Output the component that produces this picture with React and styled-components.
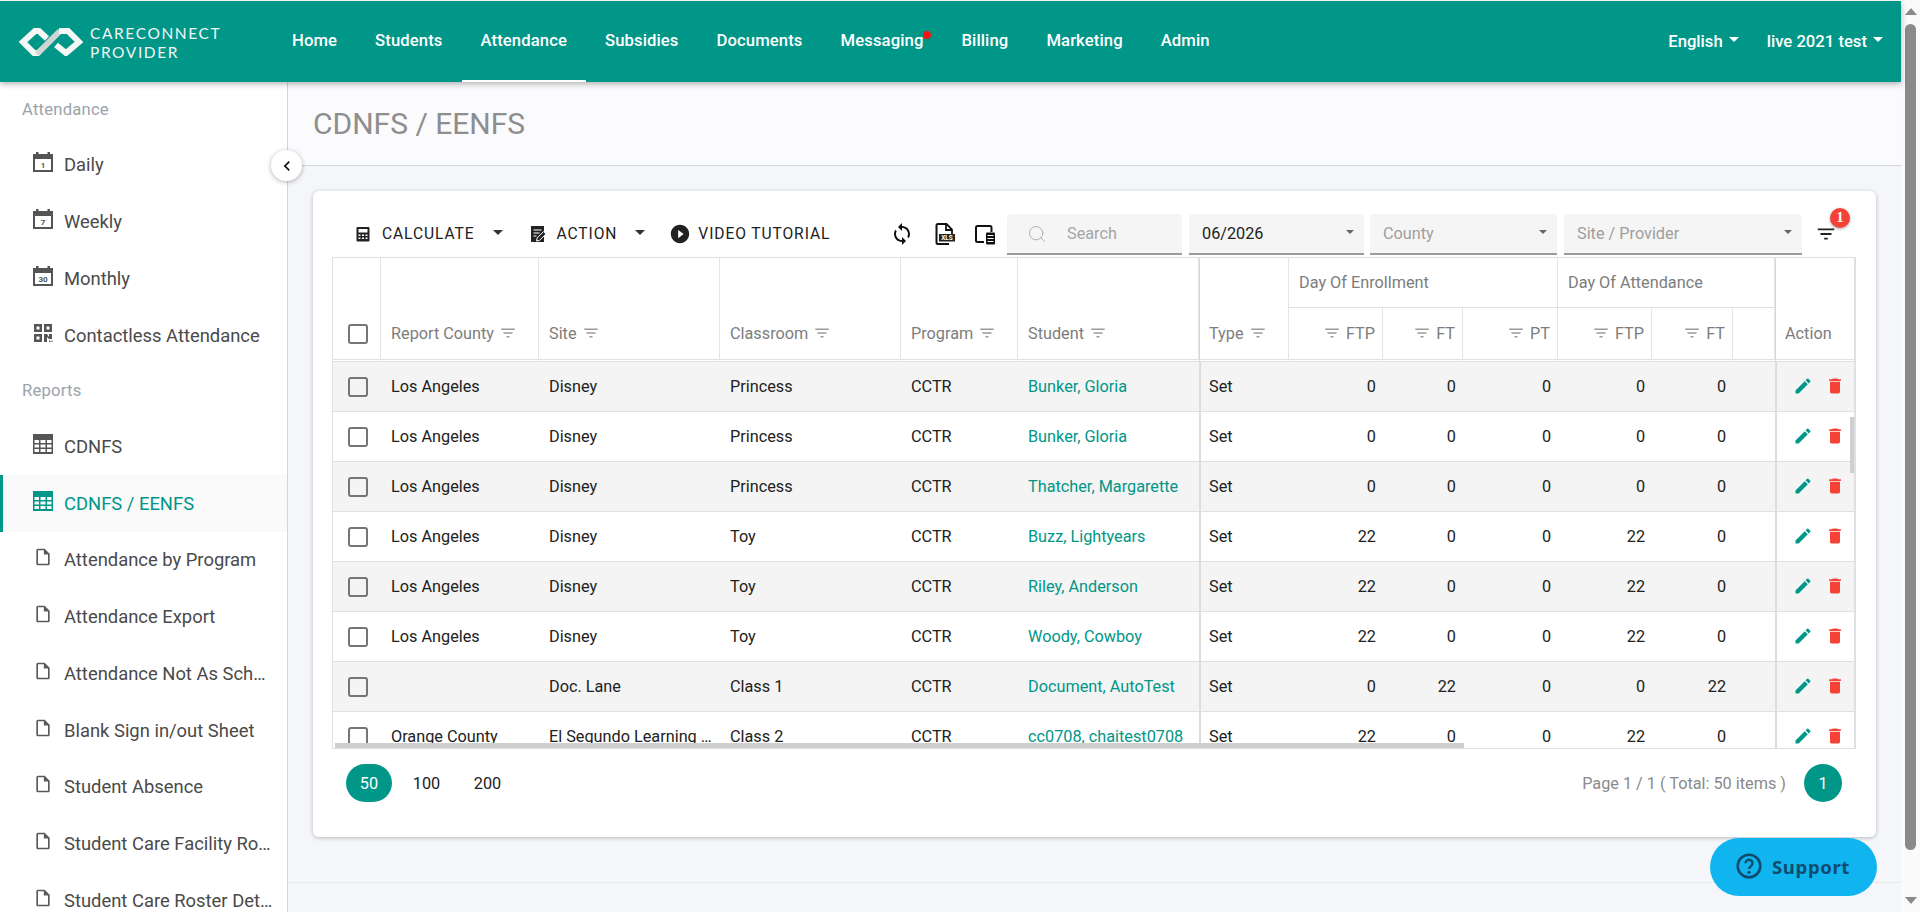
import React from "react";
import styled, { createGlobalStyle } from "styled-components";
import {
  MdPlayCircleFilled,
  MdSync,
  MdFilterList,
  MdEdit,
  MdDelete,
  MdChevronLeft,
} from "react-icons/md";
import { Search as SearchIcon } from "lucide-react";

const TEAL = "#009688";

const GlobalStyle = createGlobalStyle`
  * { box-sizing: border-box; }
  html, body { margin: 0; height: 100%; overflow: hidden; }
  body { font-family: Roboto, "Liberation Sans", sans-serif; background: #fff; }
`;

const Page = styled.div`
  display: flex;
  height: 912px;
  overflow: hidden;
`;

const Main = styled.div`
  flex: 1;
  min-width: 0;
  display: flex;
  flex-direction: column;
  padding-top: 1px;
  background: #fff;
`;

const ScrollRail = styled.div`
  width: 19px;
  background: #fafafa;
  display: flex;
  flex-direction: column;
  align-items: center;
  padding: 8px 0 8px;
`;

const RailArrow = styled.div`
  width: 0;
  height: 0;
  border-left: 6px solid transparent;
  border-right: 6px solid transparent;
  ${(p) => (p.$down ? "border-top: 7px solid #8a8a8a;" : "border-bottom: 7px solid #8a8a8a;")}
  ${(p) => (p.$down ? "margin-top: auto;" : "")}
`;

const RailThumb = styled.div`
  width: 11px;
  height: 826px;
  margin-top: 9px;
  margin-left: -1px;
  border-radius: 6px;
  background: #8a8a8a;
`;

const TopBar = styled.header`
  height: 81px;
  background: ${TEAL};
  display: flex;
  align-items: center;
  padding-left: 19px;
  box-shadow: 0 2px 6px rgba(0, 0, 0, 0.3);
  position: relative;
  z-index: 3;
  color: #fff;
`;

const Brand = styled.div`
  display: flex;
  align-items: center;
  gap: 7px;
  width: 254px;
`;

const BrandText = styled.div`
  font-family: Lato, Roboto, sans-serif;
  font-size: 15.5px;
  line-height: 19px;
  letter-spacing: 1.6px;
  color: #f2f7f6;
  margin-top: 2px;
`;

const NavList = styled.nav`
  display: flex;
  align-items: stretch;
  height: 100%;
  flex: 1;
`;

const NavItem = styled.a`
  position: relative;
  display: flex;
  align-items: center;
  padding: 0 19px;
  font-size: 16.67px;
  font-weight: 500;
  letter-spacing: 0.1px;
  color: #fff;
  margin-top: -1px;
  border-bottom: ${(p) => (p.$active ? "2px solid #fff" : "2px solid transparent")};
`;

const NavDot = styled.span`
  position: absolute;
  top: 31px;
  right: 11px;
  width: 8px;
  height: 8px;
  border-radius: 50%;
  background: #f01414;
`;

const TopRight = styled.div`
  display: flex;
  gap: 28px;
  padding-right: 18px;
  font-size: 16.67px;
  font-weight: 500;
  margin-top: -1px;
`;

const TopMenu = styled.span`
  display: flex;
  align-items: center;
  gap: 6px;
`;

const Caret = styled.span`
  display: inline-block;
  width: 0;
  height: 0;
  border-left: ${(p) => p.$size || 5}px solid transparent;
  border-right: ${(p) => p.$size || 5}px solid transparent;
  border-top: ${(p) => p.$size || 5}px solid ${(p) => p.$color || "#fff"};
  margin-bottom: 3px;
  margin-left: ${(p) => p.$offset || 0}px;
`;

const Body = styled.div`
  flex: 1;
  min-height: 0;
  display: flex;
  position: relative;
`;

const Sidebar = styled.aside`
  width: 288px;
  flex-shrink: 0;
  background: #fff;
  border-right: 1px solid #d5d5d5;
  overflow: hidden;
`;

const SideLabel = styled.div`
  height: 54.5px;
  display: flex;
  align-items: center;
  padding-left: 22px;
  font-size: 16.67px;
  letter-spacing: 0.2px;
  color: #9ba3ab;
`;

const SideItem = styled.a`
  height: 56.75px;
  display: flex;
  align-items: center;
  gap: 11px;
  padding-left: ${(p) => (p.$active ? 30 : 33)}px;
  font-size: 18.4px;
  color: ${(p) => (p.$active ? TEAL : "#4a4a4a")};
  background: ${(p) => (p.$active ? "#fafafa" : "transparent")};
  border-left: ${(p) => (p.$active ? `3px solid ${TEAL}` : "none")};

  svg {
    flex-shrink: 0;
    margin-bottom: 5px;
  }
`;

const SideText = styled.span`
  max-width: 209px;
  white-space: nowrap;
  overflow: hidden;
  text-overflow: ellipsis;
`;

const Collapse = styled.button`
  position: absolute;
  left: 271px;
  top: 68px;
  width: 31px;
  height: 31px;
  padding: 0;
  border: none;
  border-radius: 50%;
  background: #fff;
  box-shadow: 0 1px 5px rgba(0, 0, 0, 0.3);
  display: flex;
  align-items: center;
  justify-content: center;
  color: #111;
  z-index: 2;
`;

const Content = styled.main`
  flex: 1;
  min-width: 0;
  display: flex;
  flex-direction: column;
  background: #f5f6fa;
`;

const TitleBar = styled.div`
  height: 84px;
  flex-shrink: 0;
  display: flex;
  align-items: center;
  padding: 0 0 0 25px;
  background: #fbfbfd;
  border-bottom: 1px solid #cfd8dc;
`;

const Title = styled.h1`
  margin: 0;
  font-size: 30px;
  font-weight: 400;
  color: #8e8e8e;
`;

const Card = styled.section`
  margin: 25px 25px 0;
  height: 646px;
  flex-shrink: 0;
  padding: 0 20px 0 19px;
  background: #fff;
  border-radius: 6px;
  box-shadow: 0 1px 4px rgba(0, 0, 0, 0.25);
`;

const Toolbar = styled.div`
  height: 66px;
  display: flex;
  align-items: center;
  padding: 20px 0 0 22px;
`;

const ToolButton = styled.span`
  display: flex;
  align-items: center;
  gap: ${(p) => p.$iconGap || 10}px;
  font-size: 15.6px;
  letter-spacing: 0.9px;
  color: #212121;
  margin-right: ${(p) => p.$gap || 0}px;
  white-space: nowrap;
`;

const ToolIcons = styled.div`
  margin-left: auto;
  margin-right: 11px;
  display: flex;
  align-items: center;
  gap: 18px;
  color: #111;
`;

const Field = styled.div`
  width: ${(p) => p.$w}px;
  height: 41px;
  margin-right: ${(p) => p.$gap}px;
  padding: 1px 10px 0 ${(p) => p.$pad || 13}px;
  display: flex;
  align-items: center;
  justify-content: space-between;
  background: #f5f5f5;
  border-bottom: 2px solid #9a9a9a;
  border-radius: 4px 4px 0 0;
  font-size: 16.25px;
  color: ${(p) => (p.$value ? "#212121" : "#9e9e9e")};
`;

const SearchField = styled(Field)`
  justify-content: flex-start;
  gap: 20px;
  padding-left: 20px;
  color: #a5a5a5;
`;

const FilterToggle = styled.div`
  position: relative;
  width: 54px;
  display: flex;
  justify-content: center;
  padding-right: 7px;
  color: #222;
`;

const FilterBadge = styled.span`
  position: absolute;
  left: 28px;
  top: -15px;
  width: 20px;
  height: 20px;
  border-radius: 50%;
  background: #f44336;
  box-shadow: 0 1px 3px rgba(0, 0, 0, 0.35);
  color: #fff;
  font-family: "Liberation Serif", serif;
  font-weight: 700;
  font-size: 14px;
  line-height: 20px;
  text-align: center;
`;

const TableWrap = styled.div`
  position: relative;
  height: 492px;
  overflow: hidden;
  border: 1px solid #e0e0e0;
  border-width: 1px 2px 1px 1px;
`;

const Table = styled.table`
  width: 1522px;
  table-layout: fixed;
  border-collapse: separate;
  border-spacing: 0;
  font-size: 16.25px;
`;

const Th = styled.th`
  height: ${(p) => p.$h || 50}px;
  padding: 0 ${(p) => (p.$right ? 7 : p.$thick ? 9 : 10)}px ${(p) => p.$pb || 0}px;
  font-weight: 400;
  text-align: ${(p) => (p.$right ? "right" : "left")};
  vertical-align: ${(p) => (p.$bottom ? "bottom" : "middle")};
  color: #7d7d7d;
  white-space: nowrap;
  border-right: 1px solid #e4e4e4;
  border-left: ${(p) => (p.$thick ? "1px solid #d8d8d8" : "none")};
  border-bottom: ${(p) => (p.$double ? "3px double #e0e0e0" : "1px solid #e0e0e0")};

  svg {
    vertical-align: -3px;
  }
`;

const HeadGap = styled.span`
  display: inline-block;
  width: ${(p) => p.$w || 5}px;
`;

const Tr = styled.tr`
  background: ${(p) => (p.$odd ? "#f4f4f4" : "#fff")};
`;

const Td = styled.td`
  height: 50px;
  padding: 0 ${(p) => (p.$right ? 7 : p.$thick ? 8 : 6)}px 0 ${(p) => (p.$right ? 7 : p.$thick ? 8 : 10)}px;
  text-align: ${(p) => (p.$right ? "right" : "left")};
  color: ${(p) => (p.$link ? TEAL : "#212121")};
  white-space: nowrap;
  overflow: hidden;
  text-overflow: ellipsis;
  border-bottom: 1px solid #e0e0e0;
  border-left: ${(p) => (p.$thick ? "2px solid #dcdcdc" : "none")};
`;

const CheckBox = styled.span`
  display: block;
  width: 20px;
  height: 20px;
  margin-left: 5px;
  border: 2px solid #757575;
  border-radius: 3px;
  background: transparent;
`;

const Actions = styled.div`
  display: flex;
  align-items: center;
  gap: 12px;
  margin: 0 0 2px 8px;
`;

const HScroll = styled.div`
  position: absolute;
  left: 2px;
  bottom: 0;
  width: 1129px;
  height: 5px;
  background: #cfcfcf;
`;

const VScroll = styled.div`
  position: absolute;
  right: 0;
  top: 159px;
  width: 4px;
  height: 56px;
  background: #cfcfcf;
`;

const Pager = styled.div`
  height: 70px;
  display: flex;
  align-items: center;
  padding: 0 0 2px 14px;
  font-size: 16.25px;
  color: #212121;
`;

const PageSize = styled.span`
  width: ${(p) => (p.$active ? 46 : 61)}px;
  height: 38px;
  margin-right: ${(p) => (p.$active ? 4 : 0)}px;
  display: flex;
  align-items: center;
  justify-content: center;
  border-radius: 19px;
  background: ${(p) => (p.$active ? TEAL : "transparent")};
  color: ${(p) => (p.$active ? "#fff" : "#212121")};
`;

const PagerInfo = styled.span`
  margin-left: auto;
  color: #8a8a8a;
`;

const PageNumber = styled.span`
  width: 38px;
  height: 38px;
  margin: 0 14px 0 18px;
  display: flex;
  align-items: center;
  justify-content: center;
  border-radius: 50%;
  background: ${TEAL};
  color: #fff;
`;

const PageFooter = styled.div`
  margin-top: 45px;
  flex: 1;
  border-top: 1px solid #e6e8ec;
`;

const Support = styled.button`
  position: absolute;
  right: 24px;
  bottom: 16px;
  width: 167px;
  height: 58px;
  border: none;
  border-radius: 29px;
  background: #10b5f0;
  display: flex;
  align-items: center;
  gap: 10px;
  padding: 0 0 2px 26px;
  font-family: "Noto Sans", "Open Sans", sans-serif;
  font-weight: 700;
  font-size: 18.6px;
  letter-spacing: 0.6px;
  color: #0f4c6e;
  z-index: 2;
`;

const Logo = () => (
  <svg width="64" height="28" viewBox="0 0 64 28" fill="none">
    <path d="M28 10.5 L20 3 H16 L4 14 L15 25 H20" stroke="#f4f7f6" strokeWidth="6" />
    <path d="M18 26 L41 3" stroke="#cfd6d4" strokeWidth="6" />
    <path d="M40 3 H49 L60 14 L47 25 L37 17" stroke="#f4f7f6" strokeWidth="6" />
  </svg>
);

const CalendarIcon = ({ day }) => (
  <svg width="20" height="20" viewBox="0 0 20 20">
    <rect x="3" y="0" width="2.5" height="3" fill="#555" />
    <rect x="14.5" y="0" width="2.5" height="3" fill="#555" />
    <path d="M0 2h20v18H0z M2 7v11h16V7z" fill="#555" fillRule="evenodd" />
    <text x="10" y="16" textAnchor="middle" fontSize="8" fontWeight="700" fill="#555" fontFamily="Roboto">
      {day}
    </text>
  </svg>
);

const QrIcon = () => (
  <svg width="20" height="20" viewBox="0 0 20 20" fill="#555">
    <path d="M1 1h8v8H1z M3.5 3.5v3h3v-3z" fillRule="evenodd" />
    <path d="M11 1h8v8h-8z M13.5 3.5v3h3v-3z" fillRule="evenodd" />
    <path d="M1 11h8v8H1z M3.5 13.5v3h3v-3z" fillRule="evenodd" />
    <path d="M11 11h3l2 3v-3h3v5h-3l-2-2v5h-3z" />
    <rect x="16" y="17.5" width="1.5" height="1.5" />
    <rect x="18.5" y="17.5" width="1" height="1.5" />
  </svg>
);

const GridIcon = ({ color }) => (
  <svg width="20" height="20" viewBox="0 0 20 20">
    <path
      d="M0 0h20v20H0z M1.5 6v3h4.5V6z M7.5 6v3h5V6z M14 6v3h4.5V6z M1.5 10.5v3h4.5v-3z M7.5 10.5v3h5v-3z M14 10.5v3h4.5v-3z M1.5 15v3h4.5v-3z M7.5 15v3h5v-3z M14 15v3h4.5v-3z"
      fill={color || "#555"}
      fillRule="evenodd"
    />
  </svg>
);

const FileIcon = () => (
  <svg width="20" height="20" viewBox="0 0 24 24" fill="#5a5a5a">
    <path d="M14 2H6c-1.1 0-1.99.9-1.99 2L4 20c0 1.1.89 2 1.99 2H18c1.1 0 2-.9 2-2V8l-6-6zM6 20V4h7v5h5v11H6z" />
  </svg>
);

const CalcIcon = () => (
  <svg width="18" height="18" viewBox="0 0 18 18">
    <rect x="2.5" y="2" width="13" height="14.5" rx="1" fill="#222" />
    <rect x="4.5" y="4" width="9" height="3.5" fill="#fff" />
    <path d="M4.5 9.5h2v1.5h-2zM8 9.5h2v1.5H8zM11.5 9.5h2v1.5h-2zM4.5 12.5h2V14h-2zM8 12.5h2V14H8zM11.5 12.5h2V14h-2z" fill="#fff" />
  </svg>
);

const NoteIcon = () => (
  <svg width="18" height="18" viewBox="0 0 18 18">
    <path d="M2 1h13v16H2z" fill="#222" />
    <path d="M4.5 5h8M4.5 8h6M4.5 11h3" stroke="#fff" strokeWidth="1.2" />
    <path d="M7.5 16l.6-3 6.4-6.4 2.4 2.4-6.4 6.4z" fill="#222" stroke="#fff" strokeWidth="1" />
  </svg>
);

const XlsIcon = () => (
  <svg width="24" height="24" viewBox="0 0 24 24" fill="none">
    <path d="M15 2H6a1.5 1.5 0 0 0-1.5 1.5v17A1.5 1.5 0 0 0 6 22h11" stroke="#111" strokeWidth="2" />
    <path d="M14 2v6h6M14.5 2L20 7.5V12" stroke="#111" strokeWidth="1.8" />
    <rect x="7" y="12" width="16" height="7.5" fill="#222" />
    <text x="15" y="18" textAnchor="middle" fontSize="6.5" fontWeight="700" fill="#fff" fontFamily="Roboto">
      XLS
    </text>
  </svg>
);

const DeviceIcon = () => (
  <svg width="22" height="22" viewBox="0 0 22 22" fill="none">
    <path d="M10 19H3.5a1.5 1.5 0 0 1-1.5-1.5v-13A1.5 1.5 0 0 1 3.5 3H16a1.5 1.5 0 0 1 1.5 1.5V9" stroke="#111" strokeWidth="2" />
    <rect x="12" y="9.5" width="9" height="12" rx="1" fill="#111" />
    <path d="M13.5 12.5h6M13.5 15.5h6M13.5 18.5h6" stroke="#fff" strokeWidth="1.1" />
  </svg>
);

const HelpIcon = () => (
  <svg width="26" height="26" viewBox="0 0 26 26" fill="none">
    <circle cx="13" cy="13" r="11.3" stroke="#0f4c6e" strokeWidth="2.6" />
    <path d="M9.5 10.3a3.5 3.5 0 1 1 5.4 2.9c-1.2.8-1.9 1.4-1.9 2.9" stroke="#0f4c6e" strokeWidth="2.4" />
    <circle cx="13" cy="19.3" r="1.6" fill="#0f4c6e" />
  </svg>
);

const HeadFilter = () => <MdFilterList size={18} color="#9a9a9a" />;

const reportLinks = [
  "Attendance by Program",
  "Attendance Export",
  "Attendance Not As Scheduled",
  "Blank Sign in/out Sheet",
  "Student Absence",
  "Student Care Facility Roster",
  "Student Care Roster Details",
];

const navLinks = ["Home", "Students", "Attendance", "Subsidies", "Documents", "Messaging", "Billing", "Marketing", "Admin"];

const rows = [
  ["Los Angeles", "Disney", "Princess", "Bunker, Gloria", [0, 0, 0, 0, 0]],
  ["Los Angeles", "Disney", "Princess", "Bunker, Gloria", [0, 0, 0, 0, 0]],
  ["Los Angeles", "Disney", "Princess", "Thatcher, Margarette", [0, 0, 0, 0, 0]],
  ["Los Angeles", "Disney", "Toy", "Buzz, Lightyears", [22, 0, 0, 22, 0]],
  ["Los Angeles", "Disney", "Toy", "Riley, Anderson", [22, 0, 0, 22, 0]],
  ["Los Angeles", "Disney", "Toy", "Woody, Cowboy", [22, 0, 0, 22, 0]],
  ["", "Doc. Lane", "Class 1", "Document, AutoTest", [0, 22, 0, 0, 22]],
  ["Orange County", "El Segundo Learning Center", "Class 2", "cc0708, chaitest0708", [22, 0, 0, 22, 0]],
];

const columnWidths = [48, 158, 181, 181, 117, 181, 90, 94, 80, 95, 94, 81, 42, 80];

export default function App() {
  return (
    <>
      <GlobalStyle />
      <Page>
        <Main>
          <TopBar>
            <Brand>
              <Logo />
              <BrandText>
                CARECONNECT
                <br />
                PROVIDER
              </BrandText>
            </Brand>
            <NavList>
              {navLinks.map((name) => (
                <NavItem key={name} $active={name === "Attendance"}>
                  {name}
                  {name === "Messaging" && <NavDot />}
                </NavItem>
              ))}
            </NavList>
            <TopRight>
              <TopMenu>
                English <Caret />
              </TopMenu>
              <TopMenu>
                live 2021 test <Caret />
              </TopMenu>
            </TopRight>
          </TopBar>
          <Body>
            <Sidebar>
              <SideLabel>Attendance</SideLabel>
              <SideItem><CalendarIcon day="1" /><SideText>Daily</SideText></SideItem>
              <SideItem><CalendarIcon day="7" /><SideText>Weekly</SideText></SideItem>
              <SideItem><CalendarIcon day="30" /><SideText>Monthly</SideText></SideItem>
              <SideItem><QrIcon /><SideText>Contactless Attendance</SideText></SideItem>
              <SideLabel>Reports</SideLabel>
              <SideItem><GridIcon /><SideText>CDNFS</SideText></SideItem>
              <SideItem $active><GridIcon color={TEAL} /><SideText>CDNFS / EENFS</SideText></SideItem>
              {reportLinks.map((name) => (
                <SideItem key={name}>
                  <FileIcon />
                  <SideText>{name}</SideText>
                </SideItem>
              ))}
            </Sidebar>
            <Collapse>
              <MdChevronLeft size={20} />
            </Collapse>
            <Content>
              <TitleBar>
                <Title>CDNFS / EENFS</Title>
              </TitleBar>
              <Card>
                <Toolbar>
                  <ToolButton $gap={26}><CalcIcon />CALCULATE<Caret $size={5} $color="#333" $offset={8} /></ToolButton>
                  <ToolButton $gap={24}><NoteIcon />ACTION<Caret $size={5} $color="#333" $offset={8} /></ToolButton>
                  <ToolButton $iconGap={7}><MdPlayCircleFilled size={22} />VIDEO TUTORIAL</ToolButton>
                  <ToolIcons>
                    <MdSync size={24} />
                    <XlsIcon />
                    <DeviceIcon />
                  </ToolIcons>
                  <SearchField $w={175} $gap={7}>
                    <SearchIcon size={20} strokeWidth={1.2} color="#b0b0b0" />
                    Search
                  </SearchField>
                  <Field $w={175} $gap={6} $value>
                    06/2026 <Caret $size={4.5} $color="#666" />
                  </Field>
                  <Field $w={187} $gap={7}>
                    County <Caret $size={4.5} $color="#666" />
                  </Field>
                  <Field $w={238} $gap={0}>
                    Site / Provider <Caret $size={4.5} $color="#666" />
                  </Field>
                  <FilterToggle>
                    <MdFilterList size={22} />
                    <FilterBadge>1</FilterBadge>
                  </FilterToggle>
                </Toolbar>
                <TableWrap>
                  <Table>
                    <colgroup>
                      {columnWidths.map((w, i) => (
                        <col key={i} style={{ width: w }} />
                      ))}
                    </colgroup>
                    <thead>
                      <tr>
                        <Th rowSpan={2} $bottom $double $pb={15}><CheckBox /></Th>
                        <Th rowSpan={2} $bottom $double $pb={16}>Report County<HeadGap /><HeadFilter /></Th>
                        <Th rowSpan={2} $bottom $double $pb={16}>Site<HeadGap /><HeadFilter /></Th>
                        <Th rowSpan={2} $bottom $double $pb={16}>Classroom<HeadGap /><HeadFilter /></Th>
                        <Th rowSpan={2} $bottom $double $pb={16}>Program<HeadGap /><HeadFilter /></Th>
                        <Th rowSpan={2} $bottom $double $pb={16}>Student<HeadGap /><HeadFilter /></Th>
                        <Th rowSpan={2} $bottom $double $pb={16} $thick>Type<HeadGap /><HeadFilter /></Th>
                        <Th colSpan={3}>Day Of Enrollment</Th>
                        <Th colSpan={3}>Day Of Attendance</Th>
                        <Th rowSpan={2} $bottom $double $pb={16} $thick>Action</Th>
                      </tr>
                      <tr>
                        <Th $h={54} $double $right><HeadFilter /><HeadGap />FTP</Th>
                        <Th $h={54} $double $right><HeadFilter /><HeadGap />FT</Th>
                        <Th $h={54} $double $right><HeadFilter /><HeadGap />PT</Th>
                        <Th $h={54} $double $right><HeadFilter /><HeadGap />FTP</Th>
                        <Th $h={54} $double $right><HeadFilter /><HeadGap />FT</Th>
                        <Th $h={54} $double />
                      </tr>
                    </thead>
                    <tbody>
                      {rows.map(([county, site, room, student, counts], i) => (
                        <Tr key={i} $odd={i % 2 === 0}>
                          <Td><CheckBox /></Td>
                          <Td>{county}</Td>
                          <Td>{site}</Td>
                          <Td>{room}</Td>
                          <Td>CCTR</Td>
                          <Td $link>{student}</Td>
                          <Td $thick>Set</Td>
                          {counts.map((n, c) => (
                            <Td key={c} $right>{n}</Td>
                          ))}
                          <Td />
                          <Td $thick>
                            <Actions>
                              <MdEdit size={20} color={TEAL} />
                              <MdDelete size={20} color="#f44336" />
                            </Actions>
                          </Td>
                        </Tr>
                      ))}
                    </tbody>
                  </Table>
                  <HScroll />
                  <VScroll />
                </TableWrap>
                <Pager>
                  <PageSize $active>50</PageSize>
                  <PageSize>100</PageSize>
                  <PageSize>200</PageSize>
                  <PagerInfo>Page 1 / 1 ( Total: 50 items )</PagerInfo>
                  <PageNumber>1</PageNumber>
                </Pager>
              </Card>
              <PageFooter />
            </Content>
            <Support>
              <HelpIcon />
              Support
            </Support>
          </Body>
        </Main>
        <ScrollRail>
          <RailArrow />
          <RailThumb />
          <RailArrow $down />
        </ScrollRail>
      </Page>
    </>
  );
}
